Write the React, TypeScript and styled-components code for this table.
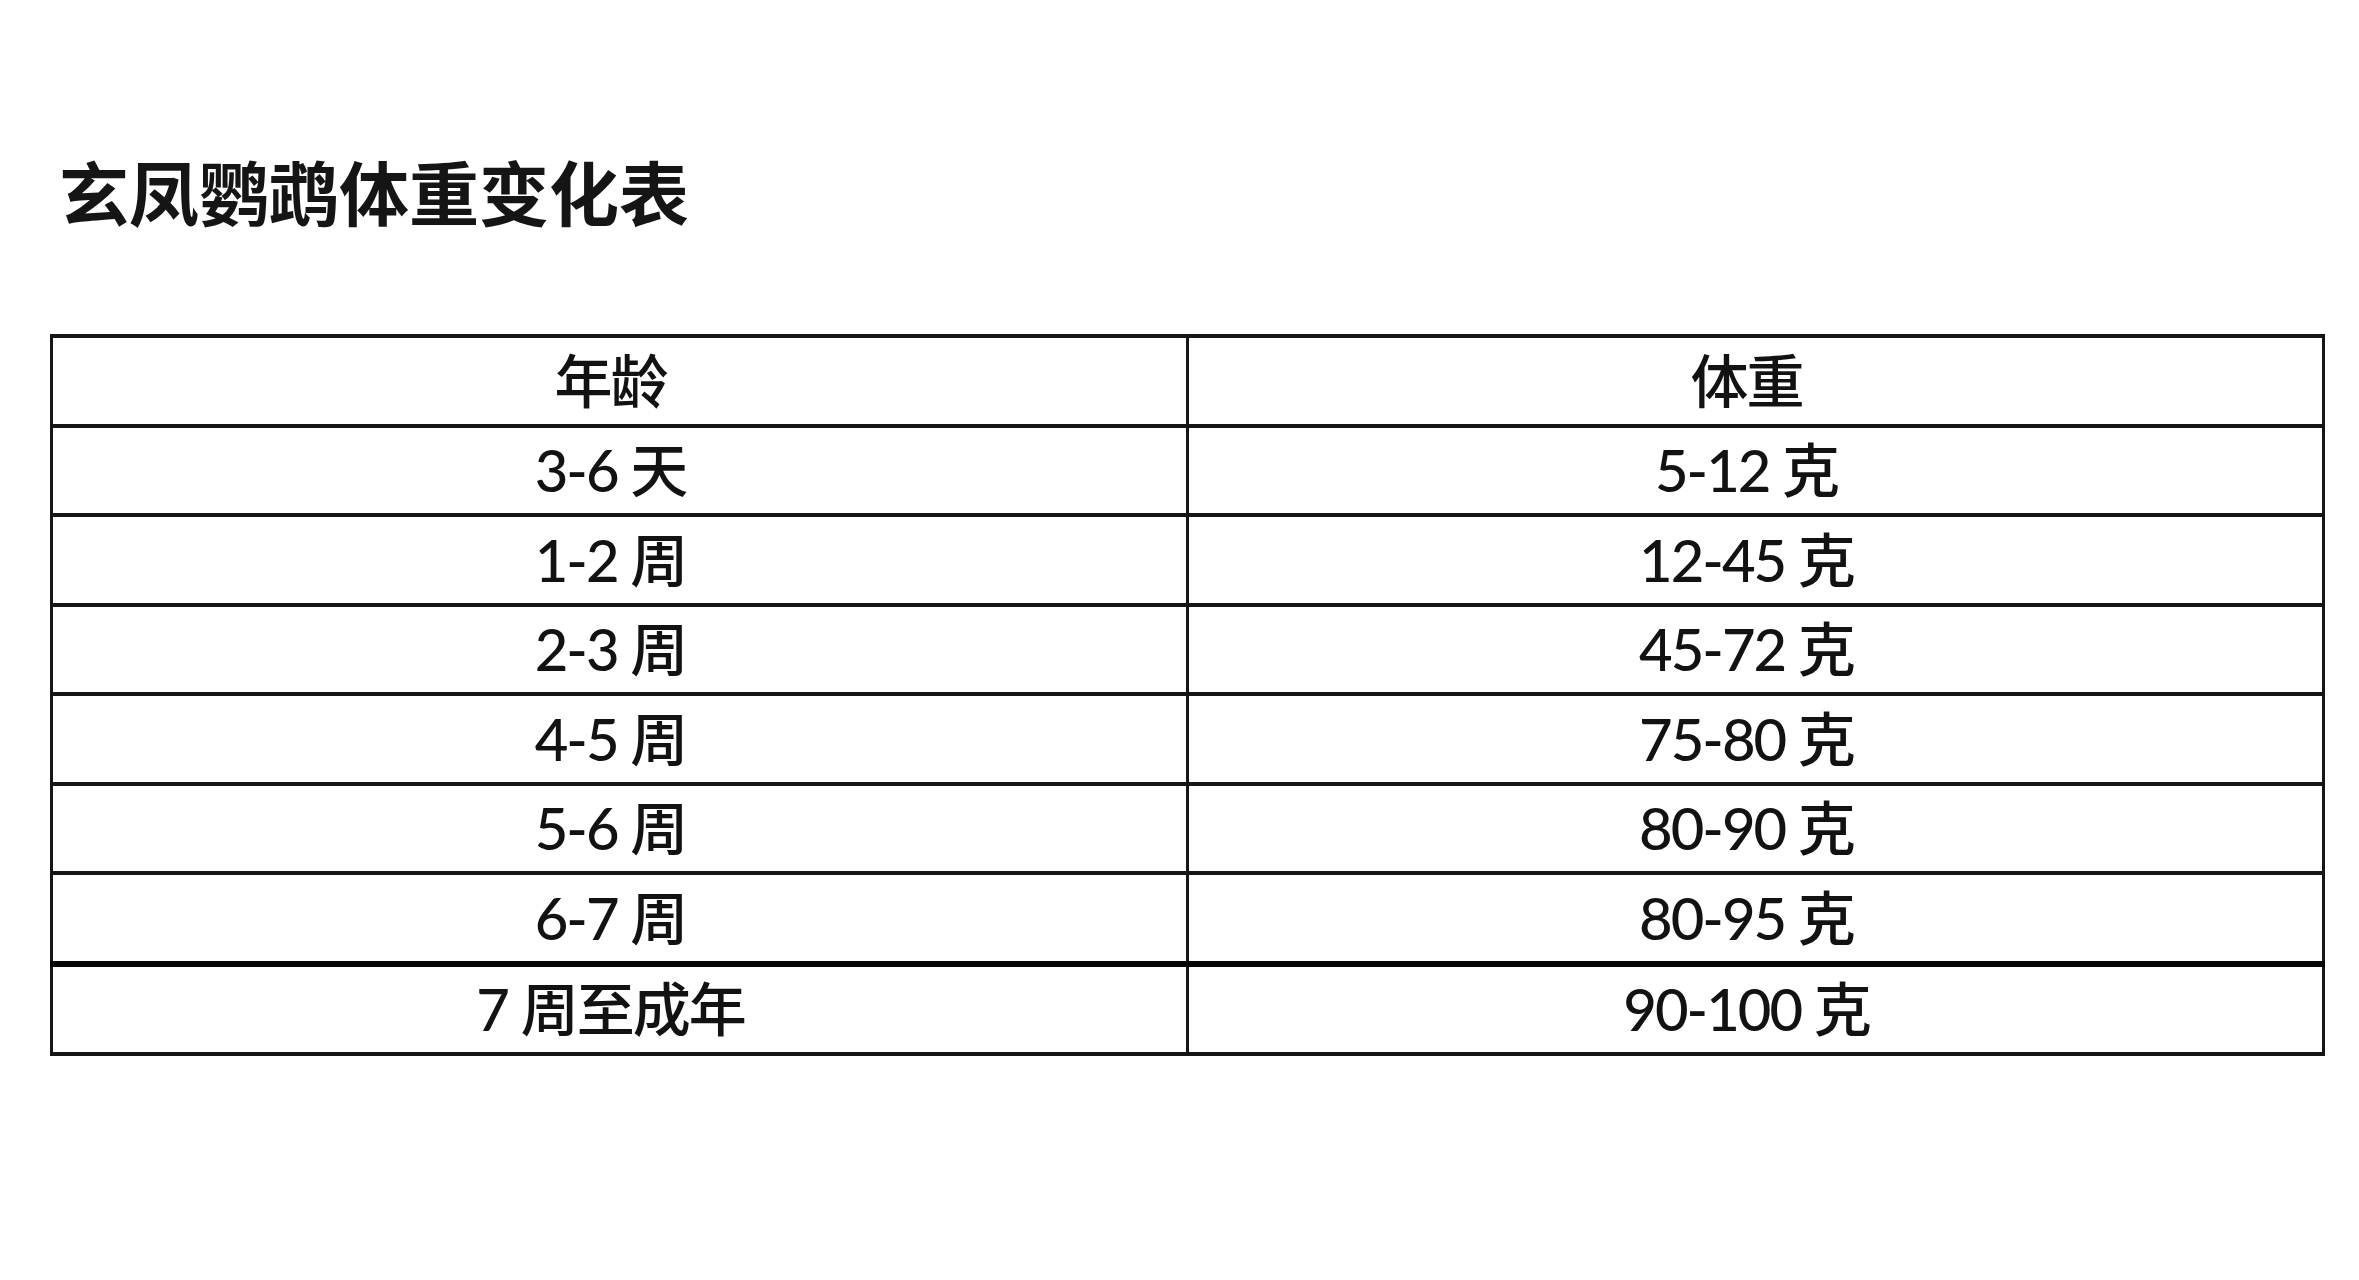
import styled, { createGlobalStyle } from "styled-components";

const GlobalStyle = createGlobalStyle`
  html, body {
    margin: 0;
    padding: 0;
    background: #ffffff;
  }
  body {
    font-family: "Noto Sans CJK SC", "Noto Sans", sans-serif;
    color: #111111;
  }
`;

const rows: [string, string][] = [
  ["3-6 天", "5-12 克"],
  ["1-2 周", "12-45 克"],
  ["2-3 周", "45-72 克"],
  ["4-5 周", "75-80 克"],
  ["5-6 周", "80-90 克"],
  ["6-7 周", "80-95 克"],
  ["7 周至成年", "90-100 克"],
];

const App = () => {
  return (
    <>
      <GlobalStyle />
      <StyledPage>
        <StyledTitle>玄凤鹦鹉体重变化表</StyledTitle>
        <StyledTable>
          <thead>
            <tr>
              <StyledHeadCell>年龄</StyledHeadCell>
              <StyledHeadCell>体重</StyledHeadCell>
            </tr>
          </thead>
          <tbody>
            {rows.map(([age, weight], i) => (
              <StyledRow key={age} $last={i === rows.length - 1}>
                <StyledCell>{age}</StyledCell>
                <StyledCell>{weight}</StyledCell>
              </StyledRow>
            ))}
          </tbody>
        </StyledTable>
      </StyledPage>
    </>
  );
};

export default App;

const StyledPage = styled.main`
  width: 2359px;
  height: 1280px;
  box-sizing: border-box;
  padding: 156px 34px 0 50px;
`;

const StyledTitle = styled.h1`
  margin: 0 0 108px 9px;
  font-family: "Noto Sans CJK SC", sans-serif;
  font-size: 70px;
  font-weight: 700;
  line-height: 1;
  color: #151515;
`;

const StyledTable = styled.table`
  width: 2275px;
  border-collapse: collapse;
  table-layout: fixed;
  border: 4px solid #161616;
  border-left-width: 3px;
  border-right-width: 3px;
`;

const cellText = `
  padding: 0 18px 0 0;
  font-family: "Lato", "Noto Sans CJK SC", sans-serif;
  font-size: 58px;
  font-weight: 500;
  letter-spacing: -2px;
  line-height: 1;
  text-align: center;
  vertical-align: middle;
  color: #121212;
`;

const StyledHeadCell = styled.th`
  ${cellText}
  width: 50%;
  height: 85.5px;
  border-bottom: 4px solid #161616;
  border-left: 3px solid #161616;
`;

const StyledRow = styled.tr<{ $last: boolean }>`
  td {
    border-top: ${(p) => (p.$last ? "6px solid #050505" : "4px solid #161616")};
  }
`;

const StyledCell = styled.td`
  ${cellText}
  height: 85.5px;
  border-left: 3px solid #161616;
  border-bottom: 4px solid #161616;
`;
